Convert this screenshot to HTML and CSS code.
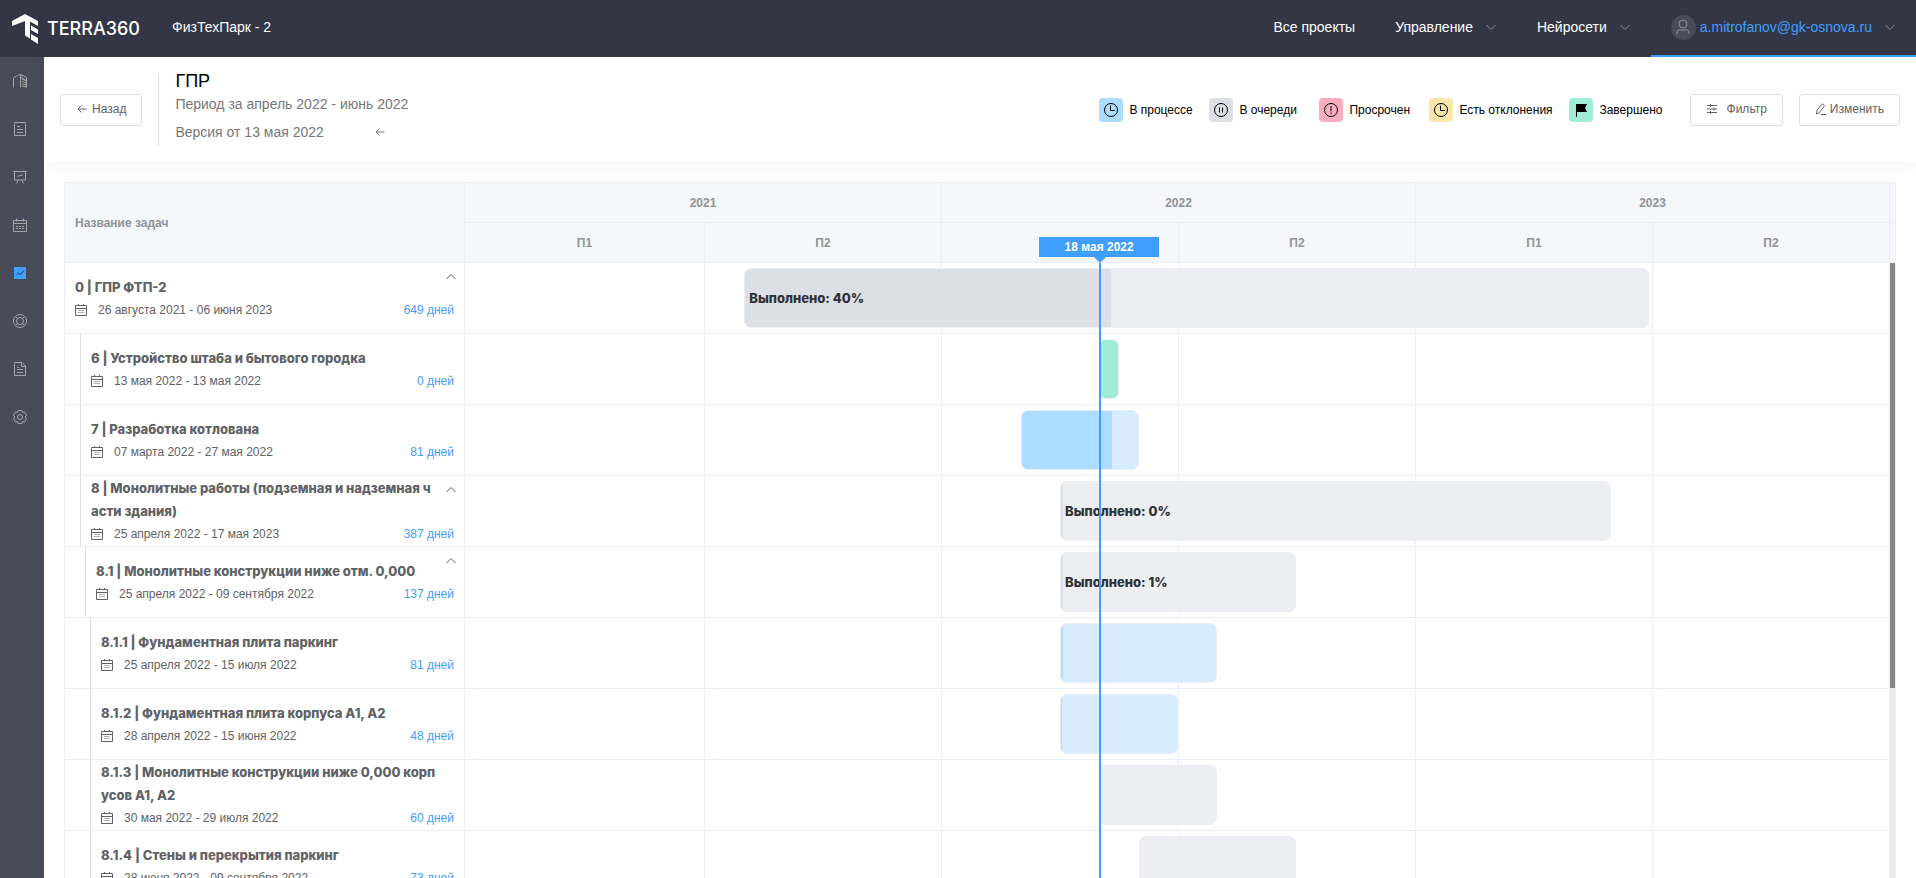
FILE: index.html
```html
<!DOCTYPE html>
<html lang="ru">
<head>
<meta charset="utf-8">
<title>TERRA360 — ГПР</title>
<link rel="stylesheet" href="styles.css">
</head>
<body>
<svg class="sprite" aria-hidden="true">
  <symbol id="chev-down" viewBox="0 0 12 12"><path d="M1.5 4l4.5 4.5L10.500 4"/></symbol>
  <symbol id="chev-up" viewBox="0 0 12 12"><path d="M1.500 8L6 3.500 10.500 8"/></symbol>
  <symbol id="arrow-left" viewBox="0 0 12 12"><path d="M10.500 6H2M5.500 2.500L2 6l3.500 3.500"/></symbol>
  <symbol id="calendar" viewBox="0 0 14 14"><path d="M.5 2.500h13v11H.5zM.5 5.500h13M3.500.5v3M10.500.5v3M3 8.500h2M6 8.500h2M9 8.500h2M3 10.500h2M6 10.500h2M9 10.500h2"/></symbol>
  <symbol id="calendar-sm" viewBox="0 0 12 12"><path d="M.5 1.500h11v10H.5zM.5 4.500h11M3.500 0v2M8.500 0v2"/><path class="faint" d="M3 6.500h6M3 8.500h6"/></symbol>
  <symbol id="clock" viewBox="0 0 16 16"><circle cx="8" cy="8" r="6.500"/><path d="M7.500 3.500v5H12"/></symbol>
</svg>

<header class="topbar">
  <a class="brand" href="#">
    <svg class="brand-mark" viewBox="0 0 26 30" aria-hidden="true"><path d="M13 0L26 7v5l-8-4.500v17l-5-3V7L0 12V7z"/><path d="M19 11.500l7 4v4.500l-7-4zM19 20l7 4v6l-7-4.500z"/></svg>
    <span class="brand-name">TERRA360</span>
  </a>
  <span class="project">ФизТехПарк - 2</span>
  <nav class="menu">
    <a class="menu-item" href="#">Все проекты</a>
    <a class="menu-item" href="#">Управление<svg class="ico"><use href="#chev-down"/></svg></a>
    <a class="menu-item" href="#">Нейросети<svg class="ico"><use href="#chev-down"/></svg></a>
    <a class="menu-item menu-user" href="#">
      <span class="avatar"><svg viewBox="0 0 14 16"><circle cx="7" cy="5" r="4"/><path d="M1 15.500v-2.500q0-2 2-2h8q2 0 2 2v2.500"/></svg></span>a.mitrofanov@gk-osnova.ru<svg class="ico"><use href="#chev-down"/></svg></a>
  </nav>
</header>

<div class="shell">
  <nav class="sidebar">
    <a href="#" aria-label="Объект"><svg viewBox="0 0 14 14"><path d="M.5 13.500V4L4 1.500M4.500 1.500L7 .5l3 1 3.500 2V13.500M7.500 1v12.500M7.500 3l5 3M9 5l4 2M9 7.500l4 1.500M9 10l4 1M9 12l4 1"/></svg></a>
    <a href="#" aria-label="Список"><svg viewBox="0 0 14 14"><path d="M1.500.5h11v13h-11zM4 4.500h3M4 7.500h6M4 10.500h6"/></svg></a>
    <a href="#" aria-label="Показатели"><svg viewBox="0 0 14 14"><path d="M0 1.500h14M1.500 1.500v8.500h11V1.500M4.500 7L6.500 5l1.500 1L10 4M5 10.500L3.500 13.500M9 10.500l1.500 3"/></svg></a>
    <a href="#" aria-label="Календарь"><svg><use href="#calendar"/></svg></a>
    <a class="active" href="#" aria-label="ГПР"><svg viewBox="0 0 14 14"><path class="solid" d="M1 1h12v12H1z"/><path class="cut" d="M3.500 9l2-2 2 1.500 3.500-4"/></svg></a>
    <a href="#" aria-label="Помощь"><svg viewBox="0 0 14 14"><circle cx="7" cy="7" r="6.500"/><circle cx="7" cy="7" r="3.500"/><path d="M2.500 2.500l2 2M11.500 2.500l-2 2M2.500 11.500l2-2M11.500 11.500l-2-2"/></svg></a>
    <a href="#" aria-label="Документы"><svg viewBox="0 0 14 14"><path d="M1.500.5h7.500l3.500 3.500v9.500h-11zM8.500.5V4.500h4M4 5.500h2M4 7.500h6M4 10.500h6"/></svg></a>
    <a href="#" aria-label="Настройки"><svg viewBox="0 0 14 14"><path d="M5 .5h4l.5 2 2-.5 2 3.500L12 7l1.500 1.500-2 3.500-2-.5-.5 2H5l-.5-2-2 .5-2-3.500L2 7 .5 5.500l2-3.500 2 .5z"/><circle cx="7" cy="7" r="2.500"/></svg></a>
  </nav>

  <main class="page">
    <section class="pagehead">
      <button class="btn btn-back" type="button"><svg class="ico"><use href="#arrow-left"/></svg>Назад</button>
      <div class="titles">
        <h1>ГПР</h1>
        <p>Период за апрель 2022 - июнь 2022</p>
        <p class="version">Версия от 13 мая 2022 <button type="button" class="prev" aria-label="Предыдущая версия"><svg class="ico"><use href="#arrow-left"/></svg></button></p>
      </div>
      <ul class="legend">
        <li><span class="chip c-work"><svg><use href="#clock"/></svg></span>В процессе</li>
        <li><span class="chip c-queue"><svg viewBox="0 0 16 16"><circle cx="8" cy="8" r="6.500"/><path d="M6.500 5.500v5M9.500 5.500v5"/></svg></span>В очереди</li>
        <li><span class="chip c-late"><svg viewBox="0 0 16 16"><circle cx="8" cy="8" r="6.500"/><path d="M8 4v5.500M8 10.500v1.500"/></svg></span>Просрочен</li>
        <li><span class="chip c-dev"><svg><use href="#clock"/></svg></span>Есть отклонения</li>
        <li><span class="chip c-done"><svg viewBox="0 0 16 16"><path class="flag" d="M3 2h11l-2 4 2 4H4v5H3z"/></svg></span>Завершено</li>
      </ul>
      <div class="actions">
        <button class="btn btn-filter" type="button"><svg class="ico" viewBox="0 0 12 12"><path d="M1 2.500h10M1 6h10M1 9.500h10M4.500 1v3M8 4.500v3M4.500 8v3"/></svg>Фильтр</button>
        <button class="btn" type="button"><svg class="ico" viewBox="0 0 12 12"><path d="M2 7.500L6.500 1.500q1-1 2 0t.5 2L4.500 9.500l-3 1.500zM6 11.500h5.500"/></svg>Изменить</button>
      </div>
    </section>

    <section class="gantt">
      <div class="gantt-head">
        <table class="grid">
          <colgroup><col class="col-name"><col class="col-first"><col><col><col><col><col><col class="col-gutter"></colgroup>
          <thead>
            <tr><th class="th-name" rowspan="2">Название задач</th><th colspan="2">2021</th><th colspan="2">2022</th><th colspan="2">2023</th><th></th></tr>
            <tr><th>П1</th><th>П2</th><th></th><th>П2</th><th>П1</th><th>П2</th><th></th></tr>
          </thead>
        </table>
      </div>
      <div class="gantt-body">
        <table class="grid">
          <colgroup><col class="col-name"><col class="col-first"><col><col><col><col><col></colgroup>
          <tbody>
            <tr><td><div class="task"><h2>0 | ГПР ФТП-2</h2><button class="fold" type="button" aria-label="Свернуть"><svg class="ico"><use href="#chev-up"/></svg></button><div class="dates"><svg><use href="#calendar-sm"/></svg><span>26 августа 2021 - 06 июня 2023</span><b>649 дней</b></div></div></td><td></td><td></td><td></td><td></td><td></td><td></td></tr>
            <tr><td><div class="task l1"><h2>6 | Устройство штаба и бытового городка</h2><div class="dates"><svg><use href="#calendar-sm"/></svg><span>13 мая 2022 - 13 мая 2022</span><b>0 дней</b></div></div></td><td></td><td></td><td></td><td></td><td></td><td></td></tr>
            <tr><td><div class="task l1"><h2>7 | Разработка котлована</h2><div class="dates"><svg><use href="#calendar-sm"/></svg><span>07 марта 2022 - 27 мая 2022</span><b>81 дней</b></div></div></td><td></td><td></td><td></td><td></td><td></td><td></td></tr>
            <tr><td><div class="task l1"><h2>8 | Монолитные работы (подземная и надземная части здания)</h2><button class="fold" type="button" aria-label="Свернуть"><svg class="ico"><use href="#chev-up"/></svg></button><div class="dates"><svg><use href="#calendar-sm"/></svg><span>25 апреля 2022 - 17 мая 2023</span><b>387 дней</b></div></div></td><td></td><td></td><td></td><td></td><td></td><td></td></tr>
            <tr><td><div class="task l2"><h2>8.1 | Монолитные конструкции ниже отм. 0,000</h2><button class="fold" type="button" aria-label="Свернуть"><svg class="ico"><use href="#chev-up"/></svg></button><div class="dates"><svg><use href="#calendar-sm"/></svg><span>25 апреля 2022 - 09 сентября 2022</span><b>137 дней</b></div></div></td><td></td><td></td><td></td><td></td><td></td><td></td></tr>
            <tr><td><div class="task l3"><h2>8.1.1 | Фундаментная плита паркинг</h2><div class="dates"><svg><use href="#calendar-sm"/></svg><span>25 апреля 2022 - 15 июля 2022</span><b>81 дней</b></div></div></td><td></td><td></td><td></td><td></td><td></td><td></td></tr>
            <tr><td><div class="task l3"><h2>8.1.2 | Фундаментная плита корпуса А1, А2</h2><div class="dates"><svg><use href="#calendar-sm"/></svg><span>28 апреля 2022 - 15 июня 2022</span><b>48 дней</b></div></div></td><td></td><td></td><td></td><td></td><td></td><td></td></tr>
            <tr><td><div class="task l3"><h2>8.1.3 | Монолитные конструкции ниже 0,000 корпусов А1, А2</h2><div class="dates"><svg><use href="#calendar-sm"/></svg><span>30 мая 2022 - 29 июля 2022</span><b>60 дней</b></div></div></td><td></td><td></td><td></td><td></td><td></td><td></td></tr>
            <tr><td><div class="task l3"><h2>8.1.4 | Стены и перекрытия паркинг</h2><div class="dates"><svg><use href="#calendar-sm"/></svg><span>28 июня 2022 - 09 сентября 2022</span><b>73 дней</b></div></div></td><td></td><td></td><td></td><td></td><td></td><td></td></tr>
          </tbody>
        </table>
        <div class="track"><div class="thumb"></div></div>
      </div>
      <div class="plot">
        <div class="lane"><div class="bar queue" style="margin-left:19.6%;width:63.5%"><i style="width:40.5%"></i><span>Выполнено: 40%</span></div></div>
        <div class="lane"><div class="bar done" style="margin-left:44.5%;width:1.4%"></div></div>
        <div class="lane"><div class="bar work" style="margin-left:39.02%;width:8.3%"><i style="width:77%"></i></div></div>
        <div class="lane"><div class="bar queue" style="margin-left:41.76%;width:38.67%"><i style="width:0.4%"></i><span>Выполнено: 0%</span></div></div>
        <div class="lane"><div class="bar queue" style="margin-left:41.76%;width:16.56%"><i style="width:1%"></i><span>Выполнено: 1%</span></div></div>
        <div class="lane"><div class="bar work" style="margin-left:41.76%;width:11.02%"><i style="width:1.3%"></i></div></div>
        <div class="lane"><div class="bar work" style="margin-left:41.76%;width:8.28%"><i style="width:1%"></i></div></div>
        <div class="lane"><div class="bar queue" style="margin-left:44.5%;width:8.28%"></div></div>
        <div class="lane"><div class="bar queue" style="margin-left:47.3%;width:11.02%"></div></div>
        <div class="today" style="left:44.5%"><span>18 мая 2022</span></div>
      </div>
    </section>
  </main>
</div>
</body>
</html>
```
FILE: styles.css
```css
* { box-sizing: border-box; }

body {
  display: flex;
  flex-direction: column;
  height: 100vh;
  margin: 0;
  overflow: hidden;
  background: #fff;
  color: #606266;
  font-family: "Liberation Sans", Arial, sans-serif;
  font-size: 12px;
}

a { color: inherit; text-decoration: none; }
button { font: inherit; color: inherit; cursor: pointer; }
svg { fill: none; stroke: currentColor; stroke-width: 1; }
.sprite { position: absolute; width: 0; height: 0; }
.ico { width: 12px; height: 12px; flex: none; }

/* top bar */
.topbar {
  display: flex;
  align-items: center;
  flex: none;
  height: 57px;
  padding-left: 12px;
  background: #333645;
  color: #fff;
  font-size: 14px;
}
.brand { display: flex; align-items: center; gap: 9px; width: 160px; }
.brand-mark { width: 26px; height: 30px; fill: #fff; stroke: none; }
.brand-name { font: 500 18px/20px Inter, sans-serif; }
.project { padding-bottom: 3px; }
.menu { display: flex; margin-left: auto; height: 100%; }
.menu-item {
  display: flex;
  align-items: center;
  padding: 0 20px 1px;
  border-bottom: 2px solid transparent;
}
.menu-item .ico { margin-left: 12px; color: #909399; }
.menu-user { border-color: #409eff; color: #409eff; }
.avatar {
  display: grid;
  place-items: center;
  width: 25px;
  height: 25px;
  margin-right: 4px;
  border-radius: 50%;
  background: #484b58;
  color: #909399;
}
.avatar svg { width: 14px; height: 16px; }

/* shell */
.shell { display: flex; flex: 1; min-height: 0; }
.sidebar { flex: none; width: 44px; background: #484b58; color: #a4a6a9; }
.sidebar a { display: flex; align-items: center; height: 48px; padding-left: 13px; }
.sidebar svg { width: 14px; height: 14px; }
.sidebar .solid { fill: #409eff; stroke: none; }
.sidebar .cut { stroke: #333645; }
.page { display: flex; flex-direction: column; flex: 1; min-width: 0; }

/* page head */
.pagehead {
  display: flex;
  align-items: center;
  flex: none;
  height: 105px;
  padding: 0 16px;
  box-shadow: 0 4px 16px rgba(0, 0, 0, .04);
}
.btn {
  display: flex;
  align-items: center;
  gap: 3px;
  height: 32px;
  padding: 0 15px 1px;
  border: 1px solid #dcdfe6;
  border-radius: 3px;
  background: #fff;
}
.btn-back { gap: 4px; }
.btn-filter { gap: 9px; }
.titles {
  height: 73px;
  margin-left: 16px;
  padding-left: 16px;
  border-left: 1px solid #dcdfe6;
}
.titles h1 { margin: 0; color: #000; font-size: 18px; font-weight: 400; line-height: 17px; }
.titles p { margin: 0; color: #777; font-size: 14px; line-height: 28px; }
.version { display: flex; align-items: center; gap: 50px; }
.prev { display: flex; padding: 0; border: 0; background: none; }
.legend {
  display: grid;
  grid-template-columns: 110px 110px 110px 140px auto;
  margin: 0 27px 0 auto;
  padding: 0;
  color: #000;
  list-style: none;
}
.legend li { display: flex; align-items: center; gap: 6px; }
.chip { display: grid; place-items: center; width: 24px; height: 24px; border-radius: 4px; }
.chip svg { width: 16px; height: 16px; }
.chip .flag { fill: #000; stroke: none; }
.c-work { background: #acdcff; }
.c-queue { background: #dcdfe6; }
.c-late { background: #f9adc0; }
.c-dev { background: #f8e7a9; }
.c-done { background: #9fedd7; }
.actions { display: flex; gap: 16px; }

/* gantt */
.gantt {
  position: relative;
  display: flex;
  flex-direction: column;
  flex: 1;
  min-height: 0;
  margin: 20px 20px 0;
  border: 1px solid #ebeef5;
  border-bottom: 0;
}
.grid { width: 100%; border-collapse: separate; border-spacing: 0; table-layout: fixed; }
.col-name { width: 400px; }
.col-first { width: 240px; }
.col-gutter { width: 5px; }
.grid th, .grid td { padding: 0; border: solid #ebeef5; border-width: 0 1px 1px 0; }
.grid th { height: 40px; background: #f5f7fa; color: #909399; font-size: 12px; }
.grid tr > th:last-child { border-right: 0; }
.grid .th-name { padding-left: 10px; text-align: left; }
.gantt-body { display: flex; flex: 1; min-height: 0; overflow: hidden; }
.gantt-body .grid { flex: 1; min-width: 0; height: 639px; }
.track { flex: none; width: 5px; background: #ebebeb; }
.thumb { height: 425px; background: #888; }

.task {
  position: relative;
  display: flex;
  flex-direction: column;
  justify-content: center;
  height: 70px;
  padding: 0 10px;
}
.l1, .l2, .l3 { border-left: 1px solid #dcdfe6; }
.l1 { margin-left: 15px; }
.l2 { margin-left: 20px; }
.l3 { margin-left: 25px; }
.task h2 {
  margin: 0 17px 0 0;
  font-family: Inter, "Liberation Sans", sans-serif;
  font-size: 13px;
  font-weight: 800;
  line-height: 23px;
  word-break: break-all;
}
.dates { display: flex; align-items: center; line-height: 22px; }
.dates svg { width: 12px; height: 12px; margin-right: 11px; }
.faint { opacity: .5; }
.dates b { margin-left: auto; color: #409eff; font-weight: 400; }
.fold { position: absolute; top: 8px; right: 7px; display: flex; padding: 0; border: 0; background: none; }

/* bars laid over the grid */
.plot { position: absolute; inset: 80px 5px 0 400px; pointer-events: none; }
.lane { height: 71px; padding: 5px 0; }
.bar {
  position: relative;
  display: flex;
  align-items: center;
  height: 60px;
  overflow: hidden;
  border: 1px solid #ebeef5;
  border-radius: 7px;
  color: #303133;
  font-family: Inter, "Liberation Sans", sans-serif;
  font-size: 13px;
  font-weight: 800;
}
.bar i { position: absolute; inset: 0 auto 0 0; }
.bar span { position: relative; padding-left: 4px; }
.queue { background: #edeef2; }
.queue i { background: #dcdfe6; }
.work { background: #d7edff; }
.work i { background: #acdcff; }
.done { background: #9fedd7; }
.today { position: absolute; top: 0; bottom: 0; width: 2px; background: #409eff; }
.today span {
  position: absolute;
  bottom: 100%;
  left: 50%;
  width: 120px;
  margin: 0 0 6px -61px;
  background: #409eff;
  color: #fff;
  font-weight: 700;
  line-height: 20px;
  text-align: center;
}
.today span::after {
  content: "";
  position: absolute;
  top: 100%;
  left: 55px;
  border: 6px solid transparent;
  border-top-color: #409eff;
  border-bottom: 0;
}
```
